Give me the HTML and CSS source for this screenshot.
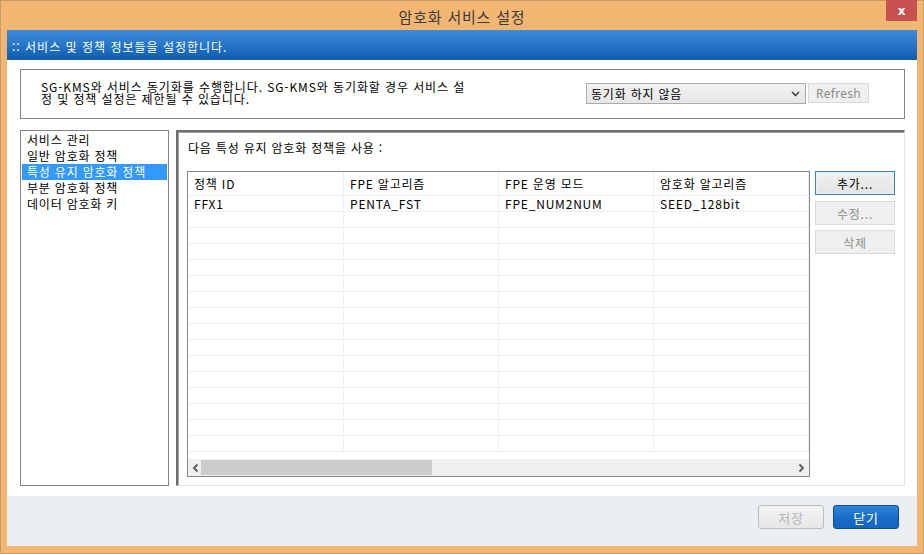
FILE: index.html
```html
<!DOCTYPE html>
<html lang="ko">
<head>
<meta charset="utf-8">
<title>암호화 서비스 설정</title>
<link rel="stylesheet" href="styles.css">
</head>
<body>
<div class="window">
  <div class="titlebar">
    <span class="title">암호화 서비스 설정</span>
    <span class="close">x</span>
  </div>
  <div class="client">
    <div class="banner">:: 서비스 및 정책 정보들을 설정합니다.</div>
    <div class="body">
      <div class="syncbox">
        <p class="syncmsg">SG-KMS와 서비스 동기화를 수행합니다. SG-KMS와 동기화할 경우 서비스 설정 및 정책 설정은 제한될 수 있습니다.</p>
        <div class="combo"><span>동기화 하지 않음</span><svg class="chev" width="9" height="6" viewBox="0 0 9 6"><path d="M1 1 L4.5 4.5 L8 1" fill="none" stroke="#333" stroke-width="1.4"/></svg></div>
        <div class="btn-refresh">Refresh</div>
      </div>
      <div class="main">
        <ul class="nav">
          <li>서비스 관리</li>
          <li>일반 암호화 정책</li>
          <li class="sel">특성 유지 암호화 정책</li>
          <li>부분 암호화 정책</li>
          <li>데이터 암호화 키</li>
        </ul>
        <div class="panel">
          <div class="label">다음 특성 유지 암호화 정책을 사용 :</div>
          <div class="panel-row">
            <div class="grid">
              <div class="gridbody">
                <div class="row head"><div>정책 ID</div><div>FPE 알고리즘</div><div>FPE 운영 모드</div><div>암호화 알고리즘</div></div>
                <div class="row"><div>FFX1</div><div>PENTA_FST</div><div>FPE_NUM2NUM</div><div>SEED_128bit</div></div>
                <div class="row"><div></div><div></div><div></div><div></div></div>
                <div class="row"><div></div><div></div><div></div><div></div></div>
                <div class="row"><div></div><div></div><div></div><div></div></div>
                <div class="row"><div></div><div></div><div></div><div></div></div>
                <div class="row"><div></div><div></div><div></div><div></div></div>
                <div class="row"><div></div><div></div><div></div><div></div></div>
                <div class="row"><div></div><div></div><div></div><div></div></div>
                <div class="row"><div></div><div></div><div></div><div></div></div>
                <div class="row"><div></div><div></div><div></div><div></div></div>
                <div class="row"><div></div><div></div><div></div><div></div></div>
                <div class="row"><div></div><div></div><div></div><div></div></div>
                <div class="row"><div></div><div></div><div></div><div></div></div>
                <div class="row"><div></div><div></div><div></div><div></div></div>
                <div class="row"><div></div><div></div><div></div><div></div></div>
                <div class="row"><div></div><div></div><div></div><div></div></div>
              </div>
              <div class="hscroll">
                <svg class="arr" width="16" height="16" viewBox="0 0 16 16"><path d="M9.5 4.5 L6 8 L9.5 11.5" fill="none" stroke="#606060" stroke-width="2"/></svg>
                <div class="track"><div class="thumb"></div></div>
                <svg class="arr" width="16" height="16" viewBox="0 0 16 16"><path d="M6.5 4.5 L10 8 L6.5 11.5" fill="none" stroke="#606060" stroke-width="2"/></svg>
              </div>
            </div>
            <div class="btns">
              <div class="btn focus">추가...</div>
              <div class="btn dis">수정...</div>
              <div class="btn dis">삭제</div>
            </div>
          </div>
        </div>
      </div>
    </div>
    <div class="footer">
      <div class="fbtn save">저장</div>
      <div class="fbtn close-btn">닫기</div>
    </div>
  </div>
</div>
</body>
</html>
```

FILE: styles.css
```css
* { box-sizing: border-box; }
html, body { margin: 0; padding: 0; }
body {
  width: 924px;
  height: 554px;
  overflow: hidden;
  font-family: "Noto Sans CJK KR", "Noto Sans", sans-serif;
  font-size: 12px;
  letter-spacing: 0.8px;
  color: #000;
}
.window {
  width: 924px;
  height: 554px;
  background: #f3b673;
  border: 1px solid #c79a66;
  padding: 0 6px 7px 6px;
  display: flex;
  flex-direction: column;
}
.titlebar {
  height: 29px;
  position: relative;
  display: flex;
  align-items: center;
  justify-content: center;
}
.title {
  font-size: 15px;
  color: #3a3a3a;
  letter-spacing: 0.8px;
  padding-top: 1px;
}
.close {
  position: absolute;
  right: 0;
  top: -1px;
  width: 31px;
  height: 21px;
  background: #c75050;
  color: #fff;
  font-family: "DejaVu Sans", sans-serif;
  font-weight: bold;
  font-size: 12px;
  letter-spacing: 0;
  display: flex;
  align-items: center;
  justify-content: center;
}
.client {
  flex: 1;
  display: flex;
  flex-direction: column;
  background: #fff;
}
.banner {
  height: 30px;
  background: linear-gradient(#3d8cd9, #2a78cb 45%, #0d5cae);
  color: #fff;
  font-size: 12px;
  letter-spacing: 1px;
  padding-left: 5px;
  display: flex;
  align-items: center;
  padding-top: 2px;
}
.body {
  flex: 1;
  padding: 9px 12px 9px 13px;
  display: flex;
  flex-direction: column;
  gap: 11px;
}
.syncbox {
  height: 50px;
  border: 1px solid #858585;
  display: flex;
  align-items: center;
  padding: 0 0 2px 20px;
}
.syncmsg {
  margin: 0;
  width: 430px;
  line-height: 12px;
  font-size: 12px;
  letter-spacing: 0.9px;
  margin-right: 115px;
  height: 24px;
}
.combo {
  width: 220px;
  height: 21px;
  border: 1px solid #acacac;
  background: linear-gradient(#f2f2f2, #e6e6e6);
  display: flex;
  align-items: center;
  justify-content: space-between;
  padding: 0 5px 0 4px;
  font-size: 12px;
}
.chev { margin-top: 2px; }
.btn-refresh {
  margin-left: 2px;
  width: 61px;
  height: 20px;
  border: 1px solid #d9d9d9;
  background: #efefef;
  color: #8a8a8a;
  font-family: "Noto Sans", sans-serif;
  font-size: 12px;
  letter-spacing: 0.3px;
  display: flex;
  align-items: center;
  justify-content: center;
}
.main {
  flex: 1;
  display: flex;
  gap: 7px;
}
.nav {
  list-style: none;
  margin: 0;
  padding: 1px 1px;
  width: 149px;
  height: 356px;
  border: 1px solid #858585;
}
.nav li {
  height: 16px;
  line-height: 16px;
  padding-left: 5px;
  white-space: nowrap;
}
.nav li.sel {
  background: #3399ff;
  color: #fff;
}
.panel {
  flex: 1;
  height: 356px;
  border-top: 2px solid #6e6e6e;
  border-left: 2px solid #6e6e6e;
  border-right: 1px solid #e3e3e3;
  border-bottom: 1px solid #e3e3e3;
  box-shadow: inset 1px 1px 0 #a0a0a0;
  padding: 8px 8px 8px 9px;
  display: flex;
  flex-direction: column;
}
.label {
  height: 16px;
  line-height: 16px;
  margin-left: 1px;
  margin-bottom: 15px;
}
.panel-row {
  display: flex;
  gap: 5px;
}
.grid {
  width: 623px;
  height: 306px;
  border: 1px solid #828790;
  display: flex;
  flex-direction: column;
}
.gridbody {
  flex: 1;
  overflow: hidden;
}
.row {
  display: grid;
  grid-template-columns: 156px 155px 155px 155px;
  height: 16px;
  border-bottom: 1px solid #f0f0f0;
}
.row > div {
  border-right: 1px solid #f0f0f0;
  padding-left: 6px;
  line-height: 15px;
  white-space: nowrap;
}
.row.head {
  height: 24px;
  border-bottom: 1px solid #e6eef8;
}
.row.head > div {
  line-height: 24px;
  border-right: 1px solid #e6eef8;
}
.hscroll {
  height: 17px;
  background: #f0f0f0;
  display: flex;
  align-items: center;
}
.arr { flex: none; }
.track {
  flex: 1;
  height: 17px;
  display: flex;
  align-items: center;
}
.thumb {
  width: 231px;
  height: 15px;
  margin-left: -3px;
  background: #cdcdcd;
}
.btns {
  display: flex;
  flex-direction: column;
  gap: 6px;
}
.btn {
  width: 80px;
  height: 24px;
  border: 1px solid #adadad;
  background: linear-gradient(#f0f0f0, #e5e5e5);
  display: flex;
  align-items: center;
  justify-content: center;
}
.btn.focus {
  border-color: #3c7fb1;
  background: linear-gradient(#f0f0f0, #e5e5e5);
  box-shadow: inset 0 0 0 1px #e5f1fb;
}
.btn.dis {
  border-color: #d9d9d9;
  background: #efefef;
  color: #8d8d8d;
}
.btn.dis:nth-child(3) { margin-top: -1px; }
.footer {
  height: 50px;
  background: #eceff2;
  display: flex;
  justify-content: flex-end;
  align-items: flex-start;
  gap: 9px;
  padding: 9px 18px 0 0;
}
.fbtn {
  width: 66px;
  height: 24px;
  border-radius: 3px;
  display: flex;
  align-items: center;
  justify-content: center;
  font-size: 13px;
}
.save {
  border: 1px solid #bcbcbc;
  background: linear-gradient(#f4f4f4, #e7e7e7);
  color: #b5b5b5;
}
.close-btn {
  border: 1px solid #0b4c9a;
  background: linear-gradient(#2b85dc, #1a6dcb 50%, #1564bf);
  color: #fff;
}
```
